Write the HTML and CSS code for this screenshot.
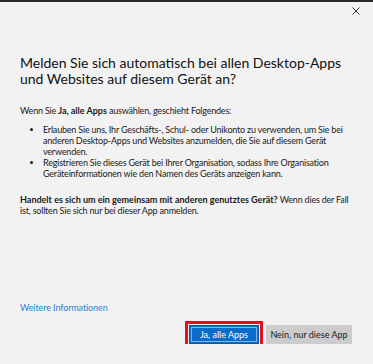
FILE: index.html
```html
<!DOCTYPE html>
<html lang="de">
<head>
  <meta charset="UTF-8">
  <title>Konto verwenden</title>
  <link rel="stylesheet" href="styles.css">
</head>
<body>
  <div class="topstrip"></div>
  <div class="dialog">
    <div class="closebar">
      <button class="close" aria-label="Schließen">
        <svg width="8" height="8" viewBox="0 0 8 8"><path d="M0.5 0.5 L7.5 7.5 M7.5 0.5 L0.5 7.5" stroke="#333" stroke-width="1" fill="none"/></svg>
      </button>
    </div>

    <h1>Melden Sie sich automatisch bei allen Desktop&#8209;Apps und Websites auf diesem Gerät an?</h1>

    <p class="intro">Wenn Sie <b>Ja, alle Apps</b> auswählen, geschieht Folgendes:</p>
    <ul class="effects">
      <li>Erlauben Sie uns, Ihr Geschäfts-, Schul- oder Unikonto zu verwenden, um Sie bei anderen Desktop-Apps und Websites anzumelden, die Sie auf diesem Gerät verwenden.</li>
      <li>Registrieren Sie dieses Gerät bei Ihrer Organisation, sodass Ihre Organisation Geräteinformationen wie den Namen des Geräts anzeigen kann.</li>
    </ul>

    <p class="shared"><b>Handelt es sich um ein gemeinsam mit anderen genutztes Gerät?</b> Wenn dies der Fall ist, sollten Sie sich nur bei dieser App anmelden.</p>

    <a class="more" href="#">Weitere Informationen</a>

    <div class="actions">
      <button class="btn primary">Ja, alle Apps</button>
      <button class="btn secondary">Nein, nur diese App</button>
    </div>
  </div>
</body>
</html>
```

FILE: styles.css
```css
body {
  margin: 0;
  background: #f2f2f2;
  font-family: Lato, 'Open Sans', sans-serif;
  color: #1a1a1a;
}
.topstrip {
  height: 2px;
  background: #2b2b2b;
}
.dialog {
  padding: 0 20px 0 20px;
}
.closebar {
  display: flex;
  justify-content: flex-end;
  height: 18px;
  margin-right: -11px;
}
.close {
  background: transparent;
  border: none;
  padding: 4px;
  cursor: pointer;
  display: flex;
  align-items: center;
}
h1 {
  font-size: 14px;
  font-weight: 400;
  line-height: 16px;
  margin: 35px 0 0;
  color: #111;
}
.intro, .shared, .effects {
  font-size: 9px;
  letter-spacing: -0.2px;
  line-height: 11px;
}
.intro b, .shared b {
  font-weight: 700;
  letter-spacing: 0;
}
.intro {
  margin: 18px 0 0;
}
.effects {
  margin: 8px 0 0;
  padding-left: 23px;
}
.shared {
  margin: 15px 0 0;
}
.more {
  display: block;
  margin-top: 86px;
  font-size: 9px;
  letter-spacing: -0.1px;
  color: #2f7fd4;
  text-decoration: none;
}
.actions {
  display: flex;
  justify-content: flex-end;
  gap: 7px;
  margin-top: 12px;
  margin-right: 1px;
}
.btn {
  font-family: inherit;
  font-size: 9px;
  height: 19px;
  padding: 0;
  white-space: nowrap;
  border: 1px solid transparent;
  cursor: pointer;
}
.primary {
  width: 70px;
  background: #0a6cc8;
  color: white;
  border-color: #0a5aa8;
  outline: 3px solid #e3101e;
  outline-offset: 1px;
  box-shadow: inset 0 0 0 1px #0a6cc8, inset 0 0 0 2px rgba(255,255,255,0.5);
}
.secondary {
  width: 86px;
  background: #cccccc;
  color: #1a1a1a;
}
```
